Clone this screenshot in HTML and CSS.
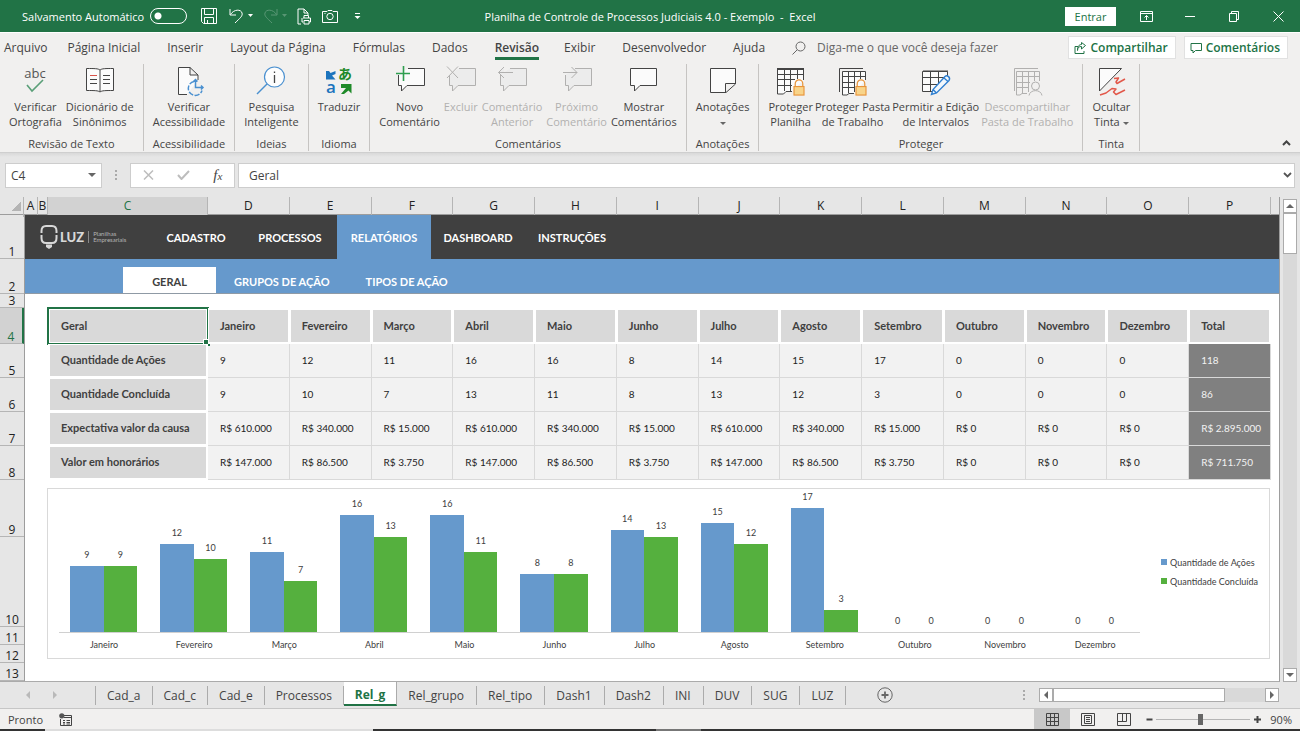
FILE: index.html
```html
<!DOCTYPE html>
<html lang="pt-BR">
<head>
    <meta charset="UTF-8">
    <title>Planilha de Controle de Processos Judiciais 4.0 - Exemplo - Excel</title>
    <link rel="stylesheet" href="styles.css">
</head>
<body>
<svg class="symbols" aria-hidden="true">
    <symbol id="bubble" viewBox="0 0 32 32">
        <path d="M4.500 11 V21.500 H7.500 V27 L13 21.500 H30.500 V4.500 H14"/>
    </symbol>
    <symbol id="lock" viewBox="0 0 12 18">
        <path d="M2 8 V5 a4 4 0 0 1 8 0 V8" fill="none" stroke="#e8943a" stroke-width="1.3"/>
        <rect x="0.7" y="8" width="10.6" height="9" fill="#f8d48a" stroke="#e8943a" stroke-width="1.2"/>
    </symbol>
</svg>

<header class="titlebar">
    <div class="quick-access">
        <label for="autosave">Salvamento Automático</label>
        <input type="checkbox" id="autosave" class="switch">
        <button class="qa save" aria-label="Salvar"><svg width="16" height="16" viewBox="0 0 16 16"><path d="M0.500 0.500 H15.500 V15.500 H2.500 L0.500 13.500 Z M3.500 0.500 V6.500 H12.500 V0.500 M3.500 15.500 V9.500 H12.500 V15.500 M6.500 12 V15"/></svg></button>
        <button class="qa undo" aria-label="Desfazer"><svg width="24" height="16" viewBox="0 0 24 16"><path d="M1 1 V7 H7 M1.500 6.500 C5 1 12 1 13 5 C14 8 11 10 6 15"/><path class="solid" d="M19 6 h5 l-2.500 3 z"/></svg></button>
        <button class="qa redo" aria-label="Refazer" disabled><svg width="24" height="16" viewBox="0 0 24 16"><path d="M14 1 V7 H8 M13.500 6.500 C10 1 3 1 2 5 C1 8 4 10 9 15"/><path class="solid" d="M19 6 h5 l-2.500 3 z"/></svg></button>
        <button class="qa" aria-label="Visualizar impressão"><svg width="15" height="17" viewBox="0 0 15 17"><path d="M4 16 H1 V1 H7 L11 5 V7 M7 1 V5 H11 M6 10 H13.500 V14 H12 M6 14 H5 V10 M7 10 V7.500 H11.500 V10 M7 12.500 H12 V16 H7 Z"/></svg></button>
        <button class="qa" aria-label="Câmera"><svg width="16" height="14" viewBox="0 0 16 14"><path d="M0.500 2.500 H5 L6 1.500 H10 L11 2.500 H15.500 V13.500 H0.500 Z M2.500 4.500 h1"/><circle cx="8" cy="7.500" r="3.200"/></svg></button>
        <button class="qa more" aria-label="Personalizar"><svg width="7" height="8" viewBox="0 0 7 8"><path d="M1 1.500 H6"/><path class="solid" d="M0.500 4 h6 l-3 3 z"/></svg></button>
    </div>
    <div class="doc-title">Planilha de Controle de Processos Judiciais 4.0 - Exemplo&nbsp; -&nbsp; Excel</div>
    <div class="window-controls">
        <button class="sign-in">Entrar</button>
        <button class="wc" aria-label="Opções da faixa"><svg width="13" height="11" viewBox="0 0 13 11"><path d="M0.500 0.500 H12.500 V10.500 H0.500 Z M0.500 2.500 H12.500 M6.500 9 V4.500 M4.500 6.500 L6.500 4.500 L8.500 6.500"/></svg></button>
        <button class="wc" aria-label="Minimizar"><svg width="10" height="11" viewBox="0 0 10 11"><path d="M0 5.500 H10"/></svg></button>
        <button class="wc" aria-label="Restaurar"><svg width="10" height="11" viewBox="0 0 10 11"><path d="M0.500 2.500 H7.500 V10.500 H0.500 Z M2.500 2.500 V0.500 H9.500 V8.500 H7.500"/></svg></button>
        <button class="wc" aria-label="Fechar"><svg width="11" height="11" viewBox="0 0 11 11"><path d="M0.500 0.500 L10.500 10.500 M10.500 0.500 L0.500 10.500"/></svg></button>
    </div>
</header>

<nav class="ribbon-tabs">
    <a href="#" class="file">Arquivo</a>
    <a href="#">Página Inicial</a>
    <a href="#">Inserir</a>
    <a href="#">Layout da Página</a>
    <a href="#">Fórmulas</a>
    <a href="#">Dados</a>
    <a href="#" class="active">Revisão</a>
    <a href="#">Exibir</a>
    <a href="#">Desenvolvedor</a>
    <a href="#">Ajuda</a>
    <button class="tell-me"><svg width="14" height="14" viewBox="0 0 14 14"><circle cx="8.500" cy="5.500" r="4.500"/><path d="M5.200 8.800 L0.500 13.500"/></svg>Diga-me o que você deseja fazer</button>
    <button class="share"><svg width="12" height="12" viewBox="0 0 12 12"><path d="M4 4.500 H1 V11.500 H10 V9 M3.500 8.500 C3.500 5.500 5 4.500 7.500 4.500 V7 L11.500 3.500 L7.500 0.500 V2.500 C5 2.500 3.500 4.500 3.500 8.500"/></svg>Compartilhar</button>
    <button class="share"><svg width="12" height="12" viewBox="0 0 12 12"><path d="M1 1.500 H11.500 V8.500 H5.500 L3 11 V8.500 H1 Z"/></svg>Comentários</button>
</nav>

<section class="ribbon">
    <div class="group">
        <div class="tools">
            <button class="tool">
                <svg class="icon" viewBox="0 0 32 32"><text x="16" y="14" class="abc">abc</text><path d="M8 21 L13 27 L24 16" stroke="#5a9f78" stroke-width="1.600"/></svg>
                Verificar<br>Ortografia
            </button>
            <button class="tool">
                <svg class="icon" viewBox="0 0 32 32"><path class="paper" d="M16 6 C14 4.500 11 4.500 2.500 4.500 V26.500 C11 26.500 14 26.500 16 28 C18 26.500 21 26.500 29.500 26.500 V4.500 C21 4.500 18 4.500 16 6 V28"/><path d="M6 15.500 H13 M6 19.500 H13 M19 11.500 H26 M19 15.500 H26 M19 19.500 H26"/><path d="M6 11.500 H13" stroke="#d9534a"/></svg>
                Dicionário de<br>Sinônimos
            </button>
        </div>
        <div class="group-name">Revisão de Texto</div>
    </div>
    <div class="group">
        <div class="tools">
            <button class="tool">
                <svg class="icon" viewBox="0 0 32 32"><path class="paper" d="M14 30.500 H5.500 V3.500 H17 L25 11 V16 M17 3.500 V11 H25"/><g stroke="#4a90d0" stroke-width="1.500"><path d="M21 17.500 a7 7 0 1 0 8 9" stroke-dasharray="5 1.500"/><path d="M22.500 15.500 V23.500 H30 M28 21.500 L30 23.500 L28 25.500 M20.500 17.500 L22.500 15.500 L24.500 17.500"/></g></svg>
                Verificar<br>Acessibilidade
            </button>
        </div>
        <div class="group-name">Acessibilidade</div>
    </div>
    <div class="group">
        <div class="tools">
            <button class="tool">
                <svg class="icon" viewBox="0 0 32 32"><path d="M12 20 L2 30" stroke="#4a90d0" stroke-width="1.400"/><circle cx="19.500" cy="13" r="10" fill="#fdfdfd" stroke="#4a90d0" stroke-width="1.200"/><path d="M19.500 11 V19 M19.500 7.500 V9" stroke-width="1.300"/></svg>
                Pesquisa<br>Inteligente
            </button>
        </div>
        <div class="group-name">Ideias</div>
    </div>
    <div class="group">
        <div class="tools">
            <button class="tool">
                <svg class="icon" viewBox="0 0 32 32"><path d="M3 7 L6 7 L7.500 9 L12.500 7 V10 L9 11.500 L12.500 15.500 H3 Z" fill="#1c74bd" stroke="none"/><text x="8" y="29" class="latin">a</text><text x="22" y="15" class="kana">あ</text><path d="M18 20 H28.500 V29.500 L25.500 26.500 L21 30 H18 L23 24 L18 24 Z" fill="#1e8a28" stroke="none"/></svg>
                Traduzir
            </button>
        </div>
        <div class="group-name">Idioma</div>
    </div>
    <div class="group">
        <div class="tools">
            <button class="tool">
                <svg class="icon bubble" viewBox="0 0 32 32"><use href="#bubble"/><path d="M2 9.500 H16 M9.500 2 V17" stroke="#2f9e4f" stroke-width="1.600"/></svg>
                Novo<br>Comentário
            </button>
            <button class="tool" disabled>
                <svg class="icon bubble" viewBox="0 0 32 32"><use href="#bubble"/><path d="M2 2.500 L13 14 M13 2.500 L2 14"/></svg>
                Excluir
            </button>
            <button class="tool" disabled>
                <svg class="icon bubble" viewBox="0 0 32 32"><use href="#bubble"/><path d="M17 8.500 H2.500 M8 3 L2.500 8.500 L8 14"/></svg>
                Comentário<br>Anterior
            </button>
            <button class="tool" disabled>
                <svg class="icon bubble" viewBox="0 0 32 32"><use href="#bubble"/><path d="M2 8.500 H16 M10.500 3 L16 8.500 L10.500 14"/></svg>
                Próximo<br>Comentário
            </button>
            <button class="tool">
                <svg class="icon bubble" viewBox="0 0 32 32"><path d="M2.500 4.500 H28.500 V21.500 H12 L6.500 27 V21.500 H2.500 Z"/></svg>
                Mostrar<br>Comentários
            </button>
        </div>
        <div class="group-name">Comentários</div>
    </div>
    <div class="group">
        <div class="tools">
            <button class="tool">
                <svg class="icon" viewBox="0 0 32 32"><path class="paper" d="M3.500 4.500 H28.500 V20 L19 28.500 H3.500 Z M28.500 19.500 H18.500 V28.500"/></svg>
                Anotações<br><span class="caret"></span>
            </button>
        </div>
        <div class="group-name">Anotações</div>
    </div>
    <div class="group">
        <div class="tools tight">
            <button class="tool">
                <svg class="icon" viewBox="0 0 32 32"><path class="paper" d="M17 27.500 H11 L8.500 30 H2.500 V5.500 H28.500 V16 M2.500 10.500 H29 M2.500 15.500 H20 M2.500 21.500 H17 M9.500 5.500 V27 M15.500 5.500 V27 M22.500 5.500 V15"/><path d="M2 5 H29" stroke-width="2"/><use href="#lock" x="18" y="15" width="12" height="17"/></svg>
                Proteger<br>Planilha
            </button>
            <button class="tool">
                <svg class="icon" viewBox="0 0 32 32"><path d="M2.500 28 V4.500 H26"/><path class="paper" d="M17 29.500 H12 L10 31 H5.500 V7.500 H28.500 V16 M5.500 12.500 H28 M5.500 18.500 H18 M5.500 23.500 H17 M11.500 8 V29 M17.500 8 V28 M23.500 8 V15"/><use href="#lock" x="18" y="15" width="12" height="17"/></svg>
                Proteger Pasta<br>de Trabalho
            </button>
            <button class="tool">
                <svg class="icon" viewBox="0 0 32 32"><path class="paper" d="M14 27.500 H2.500 V7.500 H27.500 V12 M3 13.500 H25 M3 20.500 H18 M10.500 7 V27 M18.500 7 V19 M3 7 H28"/><path d="M11.500 30.500 L13 25.500 L25 12.500 C27 10.500 31 13.500 29 16.500 L16.500 29 Z M13 25.500 L16.500 29 M24 14 L28 17.500" fill="#f2f8fd" stroke="#2f7fd0" stroke-width="1.400"/></svg>
                Permitir a Edição<br>de Intervalos
            </button>
            <button class="tool" disabled>
                <svg class="icon" viewBox="0 0 32 32"><path d="M3.500 27 V4.500 H27"/><path d="M16 29.500 H11 L9 31 H5.500 V7.500 H28.500 V17 M6 12.500 H29 M6 18.500 H19 M6 23.500 H17 M11.500 8 V29 M17.500 8 V28 M23.500 8 V17"/><circle cx="24.500" cy="22" r="4" fill="#f1f0ef"/><path d="M18 31.500 C19 25 30 25 31 31.500"/></svg>
                Descompartilhar<br>Pasta de Trabalho
            </button>
        </div>
        <div class="group-name">Proteger</div>
    </div>
    <div class="group">
        <div class="tools">
            <button class="tool">
                <svg class="icon" viewBox="0 0 32 32"><path class="paper" d="M4.500 4.500 H26.500 L4.500 27 Z"/><path d="M30 15 L22 19.500 L21 18 L23.500 14 L19 14.500 M30 26 L21 30.500 L18.500 28 L21 25 L17 24.500 L11 29 L5 31" stroke="#e2584a" stroke-width="1.500" stroke-linejoin="round"/></svg>
                Ocultar<br>Tinta <span class="caret"></span>
            </button>
        </div>
        <div class="group-name">Tinta</div>
    </div>
    <button class="collapse" aria-label="Recolher"><svg width="9" height="6" viewBox="0 0 9 6"><path d="M1 5 L4.500 1.500 L8 5"/></svg></button>
</section>

<section class="formula-bar">
    <div class="name-box">
        <input type="text" value="C4" aria-label="Caixa de nome">
        <span class="caret"></span>
    </div>
    <span class="grip"></span>
    <div class="formula-buttons">
        <button aria-label="Cancelar"><svg width="11" height="10" viewBox="0 0 11 10"><path d="M1 0.500 L10 9.500 M10 0.500 L1 9.500" stroke="#bdbdbd" stroke-width="1.500"/></svg></button>
        <button aria-label="Inserir"><svg width="13" height="10" viewBox="0 0 13 10"><path d="M1 5 L4.500 9 L12 1" stroke="#bdbdbd" stroke-width="2"/></svg></button>
        <button class="fx" aria-label="Inserir função">f<small>x</small></button>
    </div>
    <div class="formula">
        <input type="text" value="Geral" aria-label="Barra de fórmulas">
        <svg width="9" height="6" viewBox="0 0 9 6"><path d="M1 1 L4.500 4.500 L8 1" stroke="#555" stroke-width="1.800"/></svg>
    </div>
</section>

<main class="workbook">
    <div class="grid">
        <div class="col-heads">
            <span class="corner"></span><span>A</span><span>B</span><span class="selected">C</span><span>D</span><span>E</span><span>F</span><span>G</span><span>H</span><span>I</span><span>J</span><span>K</span><span>L</span><span>M</span><span>N</span><span>O</span><span>P</span><span></span>
        </div>
        <div class="row-heads">
            <span>1</span><span>2</span><span>3</span><span class="selected">4</span><span>5</span><span>6</span><span>7</span><span>8</span><span>9</span><span>10</span><span>11</span><span>12</span><span>13</span><span></span>
        </div>
        <div class="sheet">
            <nav class="menu">
                <div class="logo">
                    <svg width="18" height="26" viewBox="0 0 18 26"><path d="M1.500 9 V7 C1.500 3 3 2 6 2 H12 C15 2 16.500 3 16.500 7 V9 M1.500 11 V14 C1.500 18 3 19 6 19 H12 C15 19 16.500 18 16.500 14 V11" fill="none" stroke="#d8d8d8" stroke-width="2"/><path d="M6 20.500 H12 V23 L9 25 L6 23 Z" fill="#d8d8d8" stroke="none"/></svg>
                    <b>LUZ</b>
                    <small>Planilhas<br>Empresariais</small>
                </div>
                <a href="#">CADASTRO</a>
                <a href="#">PROCESSOS</a>
                <a href="#" class="active">RELATÓRIOS</a>
                <a href="#">DASHBOARD</a>
                <a href="#">INSTRUÇÕES</a>
            </nav>
            <nav class="submenu">
                <a href="#" class="active">GERAL</a>
                <a href="#">GRUPOS DE AÇÃO</a>
                <a href="#">TIPOS DE AÇÃO</a>
            </nav>
            <table class="report">
                <thead>
                    <tr><th class="cell-cursor">Geral</th><th>Janeiro</th><th>Fevereiro</th><th>Março</th><th>Abril</th><th>Maio</th><th>Junho</th><th>Julho</th><th>Agosto</th><th>Setembro</th><th>Outubro</th><th>Novembro</th><th>Dezembro</th><th>Total</th></tr>
                </thead>
                <tbody>
                    <tr><th>Quantidade de Ações</th><td>9</td><td>12</td><td>11</td><td>16</td><td>16</td><td>8</td><td>14</td><td>15</td><td>17</td><td>0</td><td>0</td><td>0</td><td>118</td></tr>
                    <tr><th>Quantidade Concluída</th><td>9</td><td>10</td><td>7</td><td>13</td><td>11</td><td>8</td><td>13</td><td>12</td><td>3</td><td>0</td><td>0</td><td>0</td><td>86</td></tr>
                    <tr><th>Expectativa valor da causa</th><td>R$ 610.000</td><td>R$ 340.000</td><td>R$ 15.000</td><td>R$ 610.000</td><td>R$ 340.000</td><td>R$ 15.000</td><td>R$ 610.000</td><td>R$ 340.000</td><td>R$ 15.000</td><td>R$ 0</td><td>R$ 0</td><td>R$ 0</td><td>R$ 2.895.000</td></tr>
                    <tr><th>Valor em honorários</th><td>R$ 147.000</td><td>R$ 86.500</td><td>R$ 3.750</td><td>R$ 147.000</td><td>R$ 86.500</td><td>R$ 3.750</td><td>R$ 147.000</td><td>R$ 86.500</td><td>R$ 3.750</td><td>R$ 0</td><td>R$ 0</td><td>R$ 0</td><td>R$ 711.750</td></tr>
                </tbody>
            </table>
            <div class="chart">
                <div class="plot" id="plot"></div>
                <ul class="legend">
                    <li>Quantidade de Ações</li>
                    <li class="done">Quantidade Concluída</li>
                </ul>
            </div>
        </div>
    </div>
    <div class="vscroll">
        <button aria-label="Rolar para cima"><i class="arrow up"></i></button>
        <div class="thumb"></div>
        <button class="end" aria-label="Rolar para baixo"><i class="arrow down"></i></button>
    </div>
</main>

<nav class="sheet-tabs">
    <div class="tab-arrows"><i class="arrow left"></i><i class="arrow right"></i></div>
    <a href="#">Cad_a</a>
    <a href="#">Cad_c</a>
    <a href="#">Cad_e</a>
    <a href="#">Processos</a>
    <a href="#" class="active">Rel_g</a>
    <a href="#">Rel_grupo</a>
    <a href="#">Rel_tipo</a>
    <a href="#">Dash1</a>
    <a href="#">Dash2</a>
    <a href="#">INI</a>
    <a href="#">DUV</a>
    <a href="#">SUG</a>
    <a href="#">LUZ</a>
    <button class="add-sheet" aria-label="Nova planilha"><svg width="16" height="16" viewBox="0 0 16 16"><circle cx="8" cy="8" r="7.200"/><path d="M4.500 8 H11.500 M8 4.500 V11.500" stroke-width="1.800"/></svg></button>
    <span class="grip"></span>
    <div class="hscroll">
        <button aria-label="Rolar para a esquerda"><i class="arrow left"></i></button>
        <div class="thumb"></div>
        <button class="end" aria-label="Rolar para a direita"><i class="arrow right"></i></button>
    </div>
</nav>

<footer class="statusbar">
    <span>Pronto</span>
    <svg class="macro" width="13" height="13" viewBox="0 0 13 13"><path d="M5 2.500 H12.500 V12.500 H1.500 V6 M5 4.500 H12.500 M4 7.500 H6 M7.500 7.500 H11 M4 9.500 H6 M7.500 9.500 H11 M4 11 H6 M7.500 11 H11"/><circle cx="2.800" cy="2.800" r="2.600" fill="#555" stroke="none"/></svg>
    <div class="views">
        <button class="active" aria-label="Normal"><svg width="13" height="13" viewBox="0 0 13 13"><path d="M0.500 0.500 H12.500 V12.500 H0.500 Z M4.500 0.500 V12.500 M8.500 0.500 V12.500 M0.500 4.500 H12.500 M0.500 8.500 H12.500"/></svg></button>
        <button aria-label="Layout da Página"><svg width="14" height="13" viewBox="0 0 14 13"><path d="M0.500 0.500 H13.500 V12.500 H0.500 Z M3.500 2.500 H10.500 V10.500 H3.500 Z M5 4.500 H9 M5 6.500 H9 M5 8.500 H9"/></svg></button>
        <button aria-label="Quebra de Página"><svg width="14" height="13" viewBox="0 0 14 13"><path d="M0.500 0.500 H13.500 V12.500 H0.500 Z M0.500 8.500 H9.500 V0.500 M5.500 0.500 V8.500"/></svg></button>
    </div>
    <button class="zoom-step" aria-label="Menos zoom"><svg width="7" height="7" viewBox="0 0 7 7"><path d="M0.500 3.500 H6.500"/></svg></button>
    <input type="range" class="zoom" min="10" max="170" value="85" aria-label="Zoom">
    <button class="zoom-step" aria-label="Mais zoom"><svg width="7" height="7" viewBox="0 0 7 7"><path d="M0 3.500 H7 M3.500 0 V7"/></svg></button>
    <span class="zoom-value">90%</span>
</footer>
<div class="taskbar-edge"></div>

<script>
    const months = ['Janeiro', 'Fevereiro', 'Março', 'Abril', 'Maio', 'Junho', 'Julho', 'Agosto', 'Setembro', 'Outubro', 'Novembro', 'Dezembro'];
    const actions = [9, 12, 11, 16, 16, 8, 14, 15, 17, 0, 0, 0];
    const done = [9, 10, 7, 13, 11, 8, 13, 12, 3, 0, 0, 0];

    // tallest bar (17) is 124px high
    function bar(value, cls) {
        return `<div class="bar ${cls}"><span>${value}</span><i style="height: ${Math.round(value * 124 / 17)}px"></i></div>`;
    }

    document.getElementById('plot').innerHTML = months.map((month, i) => `
        <div class="month">
            <div class="bars">${bar(actions[i], '')}${bar(done[i], 'done')}</div>
            <div class="month-name">${month}</div>
        </div>`).join('');
</script>
</body>
</html>
```
FILE: styles.css
```css
* {
    box-sizing: border-box;
}
body {
    margin: 0;
    height: 100vh;
    display: flex;
    flex-direction: column;
    overflow: hidden;
    background: #e6e6e6;
    color: #444;
    font-family: "Open Sans", sans-serif;
    font-size: 12px;
}
a {
    color: inherit;
    text-decoration: none;
}
button, input {
    margin: 0;
    padding: 0;
    border: 0;
    background: none;
    color: inherit;
    font: inherit;
}
svg {
    fill: none;
    stroke: currentColor;
    flex: none;
}
.symbols {
    display: none;
}
.caret {
    display: inline-block;
    vertical-align: middle;
    border: 3px solid transparent;
    border-top-color: #666;
    border-bottom: 0;
}
.grip {
    width: 2px;
    height: 10px;
    background: repeating-linear-gradient(#aaa 0 2px, transparent 2px 4px);
}

/* title bar */
.titlebar {
    flex: none;
    height: 32px;
    display: grid;
    grid-template-columns: 1fr auto 1fr;
    align-items: center;
    background: #217346;
    color: #fff;
    font-size: 11px;
}
.quick-access {
    display: flex;
    align-items: center;
    padding-left: 22px;
}
.switch {
    appearance: none;
    width: 37px;
    height: 16px;
    margin: 0 14px 0 6px;
    border: 1px solid #fff;
    border-radius: 8px;
    background: radial-gradient(circle at 7px 7px, #fff 3px, transparent 4px);
}
.qa {
    display: flex;
    margin-right: 10px;
}
.qa.save {
    margin-right: 12px;
}
.redo {
    opacity: 0.25;
}
.solid {
    fill: currentColor;
    stroke: none;
}
.qa.more {
    margin-left: 6px;
}
.window-controls {
    display: flex;
    align-items: center;
    justify-content: flex-end;
}
.sign-in {
    width: 51px;
    height: 19px;
    margin-right: 8px;
    background: #fff;
    color: #217346;
}
.wc {
    width: 44px;
    display: flex;
    justify-content: center;
}

/* ribbon */
.ribbon-tabs {
    flex: none;
    height: 30px;
    display: flex;
    align-items: center;
    padding: 0 12px 0 4px;
    background: #f1f0ef;
    border-top: 1px solid #fff;
}
.ribbon-tabs a {
    margin-right: 27px;
    white-space: nowrap;
}
.ribbon-tabs .file {
    margin-right: 20px;
}
.ribbon-tabs .active {
    margin-right: 25px;
    padding: 4px 0 1px;
    border-bottom: 3px solid #217346;
    font-weight: 600;
}
.tell-me {
    display: flex;
    align-items: center;
    gap: 11px;
    margin-right: auto;
    color: #666;
    white-space: nowrap;
}
.share {
    height: 23px;
    display: flex;
    align-items: center;
    gap: 4px;
    margin-left: 8px;
    padding: 0 7px 0 5px;
    background: #fff;
    border: 1px solid #e1e1e1;
    color: #217346;
    font-weight: 600;
}
.ribbon {
    flex: none;
    height: 91px;
    display: flex;
    padding-top: 2px;
    background: #f1f0ef;
    border-bottom: 1px solid #cfcfcf;
    font-size: 11px;
}
.group {
    display: flex;
    flex-direction: column;
    justify-content: space-between;
    height: 87px;
    padding: 0 9px;
    border-right: 1px solid #c6c4c2;
}
.tools {
    display: flex;
    gap: 4px;
}
.tools.tight {
    gap: 2px;
}
.tool {
    display: block;
    line-height: 15px;
    white-space: nowrap;
    text-align: center;
    align-self: flex-start;
}
.tool:disabled {
    color: #b1b0af;
}
.icon {
    display: block;
    width: 32px;
    height: 32px;
    margin: 0 auto 3px;
    overflow: visible;
}
.paper, .bubble {
    fill: #fbfbfb;
}
.tool:disabled .bubble {
    fill: #ececec;
}
.abc, .latin, .kana {
    fill: #555;
    stroke: none;
    font-size: 13px;
    text-anchor: middle;
}
.latin {
    fill: #1c74bd;
    font-size: 17px;
    font-weight: 600;
}
.kana {
    fill: #1e8a28;
    font-family: "Noto Sans CJK JP", sans-serif;
    font-weight: 700;
    font-size: 14px;
}
.group-name {
    line-height: 14px;
    text-align: center;
}
.collapse {
    margin: auto 9px 3px auto;
    stroke-width: 2px;
}

/* formula bar */
.formula-bar {
    flex: none;
    height: 44px;
    display: flex;
    align-items: center;
    padding: 0 5px;
    background: linear-gradient(#d9d9d9, #e6e6e6 4px);
}
.name-box, .formula-buttons, .formula {
    height: 25px;
    display: flex;
    align-items: center;
    background: #fff;
    border: 1px solid #cdcdcd;
}
.name-box {
    width: 97px;
    padding: 0 5px;
}
.name-box input {
    flex: 1;
    min-width: 0;
}
.name-box .caret {
    border-width: 4px 4px 0;
}
.formula-bar .grip {
    margin: 0 13px;
}
.formula-buttons {
    width: 105px;
    justify-content: space-around;
    margin-right: 3px;
}
.fx {
    font-family: "Liberation Serif", serif;
    font-style: italic;
    font-size: 15px;
}
.fx small {
    font-size: 11px;
}
.formula {
    flex: 1;
    padding: 0 2px 0 10px;
}
.formula input {
    flex: 1;
}

/* worksheet */
.workbook {
    flex: 1;
    min-height: 0;
    display: flex;
}
.grid {
    flex: 1;
    min-height: 0;
    display: grid;
    grid-template: 18px 1fr / 25px 1fr;
    border-right: 1px solid #9d9d9d;
    border-bottom: 1px solid #ababab;
    color: #222;
    overflow: hidden;
}
.col-heads {
    grid-column: 1 / 3;
    display: grid;
    grid-template-columns: 24px 14px 10px 160px repeat(13, 1fr) 8px;
    border-bottom: 1px solid #9d9d9d;
    line-height: 18px;
    text-align: center;
}
.col-heads span {
    border-right: 1px solid #b5b5b5;
}
.col-heads .selected {
    background: #d2d2d2;
    border-bottom: 2px solid #217346;
    color: #217346;
}
.col-heads .corner {
    background: linear-gradient(135deg, transparent 50%, #b4b4b4 50%) 11px 4px / 10px 10px no-repeat;
}
.col-heads span:last-child {
    border: 0;
}
.row-heads {
    display: grid;
    grid-template-rows: 44px 35px 14px 36px 34px 34px 34px 34px 57px 90px 18px 18px 18px 1fr;
    border-right: 1px solid #9d9d9d;
    text-align: center;
    line-height: 13px;
}
.row-heads span {
    display: flex;
    align-items: flex-end;
    justify-content: center;
    border-bottom: 1px solid #b5b5b5;
    min-height: 0;
}
.row-heads .selected {
    background: #d2d2d2;
    border-right: 2px solid #217346;
    color: #217346;
}
.sheet {
    background: #fff;
    font-family: Lato, sans-serif;
    font-size: 11px;
}
.menu {
    height: 44px;
    display: flex;
    background: #404040;
    color: #fff;
    font-weight: 700;
}
.logo {
    width: 124px;
    display: flex;
    align-items: center;
    padding-left: 15px;
    color: #d8d8d8;
}
.logo b {
    margin: 0 4px 0 2px;
    font-size: 13px;
}
.logo small {
    padding-left: 4px;
    border-left: 1px solid #8a8a8a;
    font-size: 6px;
    line-height: 6px;
    font-weight: 400;
    color: #b5b5b5;
}
.menu a {
    width: 94px;
    display: flex;
    align-items: center;
    justify-content: center;
}
.menu .active {
    background: #6699cc;
}
.submenu {
    height: 35px;
    display: flex;
    align-items: flex-end;
    padding-left: 98px;
    background: #6699cc;
    border-bottom: 1px solid #8f9aa5;
    color: #fff;
    font-weight: 700;
}
.submenu a {
    padding: 3px 18px 0;
    line-height: 23px;
}
.submenu .active {
    min-width: 93px;
    background: #fff;
    color: #404040;
    text-align: center;
}
.report {
    width: calc(100% - 31px);
    margin: 14px 0 0 23px;
    border-spacing: 0;
    table-layout: fixed;
    font-size: 10px;
}
.report th, .report td {
    height: 34px;
    padding: 0 0 2px 11px;
    text-align: left;
    white-space: nowrap;
}
.report th {
    position: relative;
    background: #d9d9d9;
    border: solid #fff;
    border-width: 1px 2px 2px 1px;
    color: #404040;
    font-size: 11px;
}
.report th:first-child {
    width: 160px;
    border-left-width: 2px;
}
.report thead th {
    height: 36px;
    border-top-width: 2px;
}
.report td {
    padding-left: 12px;
    background: #f2f2f2;
    border: solid #d9d9d9;
    border-width: 0 1px 1px 0;
}
.report td:last-child {
    background: #808080;
    color: #f2f2f2;
}
.cell-cursor::before {
    content: "";
    position: absolute;
    inset: -3px -3px -3px -3px;
    border: 2px solid #217346;
}
.cell-cursor::after {
    content: "";
    position: absolute;
    right: -4px;
    bottom: -4px;
    width: 6px;
    height: 6px;
    background: #217346;
    border: solid #fff;
    border-width: 1px 0 0 1px;
}

/* chart */
.chart {
    display: flex;
    justify-content: space-between;
    height: 171px;
    margin: 8px 9px 0 22px;
    padding: 0 11px;
    border: 1px solid #d9d9d9;
    font-size: 9px;
    color: #404040;
}
.plot {
    flex: 1;
    display: flex;
}
.month {
    flex: 1;
    text-align: center;
}
.bars {
    height: 144px;
    display: flex;
    align-items: flex-end;
    padding: 0 12px 0 11px;
    border-bottom: 1px solid #d0d0d0;
}
.bar {
    flex: 1;
}
.bar span {
    display: block;
    line-height: 11px;
    margin-bottom: 6px;
}
.bar i {
    display: block;
    background: #6699cc;
}
.bar.done i {
    background: #55b03e;
}
.month-name {
    line-height: 24px;
}
.legend {
    align-self: center;
    margin: 0 0 4px 21px;
    padding: 0;
    list-style: none;
    line-height: 19px;
}
.legend li {
    display: flex;
    align-items: center;
    gap: 3px;
    white-space: nowrap;
}
.legend li::before {
    content: "";
    width: 6px;
    height: 6px;
    background: #6699cc;
}
.legend .done::before {
    background: #55b03e;
}

/* scroll bars */
.vscroll {
    display: flex;
    flex-direction: column;
    width: 14px;
    margin: 2px 3px 0;
    background: #d9d9d9;
}
.hscroll {
    display: flex;
    width: 240px;
    height: 14px;
    margin-right: 21px;
    background: #d9d9d9;
}
.vscroll button, .hscroll button {
    width: 14px;
    height: 14px;
    display: flex;
    align-items: center;
    justify-content: center;
    background: #fff;
    border: 1px solid #ababab;
}
.thumb {
    background: #fff;
    border: 1px solid #ababab;
}
.vscroll .thumb {
    height: 41px;
}
.hscroll .thumb {
    width: 172px;
}
.vscroll .end {
    margin-top: auto;
}
.hscroll .end {
    margin-left: auto;
}
.arrow {
    border: 4px solid transparent;
}
.arrow.up {
    border-bottom-color: #666;
    border-top: 0;
}
.arrow.down {
    border-top-color: #666;
    border-bottom: 0;
}
.arrow.left {
    border-right-color: #666;
    border-left: 0;
}
.arrow.right {
    border-left-color: #666;
    border-right: 0;
}

/* sheet tabs */
.sheet-tabs {
    flex: none;
    height: 27px;
    display: flex;
    align-items: center;
    border-bottom: 1px solid #c6c6c6;
    color: #444;
}
.tab-arrows {
    width: 96px;
    display: flex;
    align-items: center;
    gap: 23px;
    padding-left: 26px;
    opacity: 0.35;
    height: 19px;
    border-right: 1px solid #444;
}
.sheet-tabs a {
    padding: 0 11px;
    line-height: 19px;
    border-right: 1px solid #ababab;
}
.sheet-tabs a:nth-of-type(n+6) {
    padding-right: 12px;
}
.sheet-tabs .active {
    align-self: flex-start;
    height: 24px;
    line-height: 26px;
    background: #fff;
    border-bottom: 2px solid #217346;
    color: #217346;
    font-weight: 700;
}
.add-sheet {
    display: flex;
    margin: 0 auto 0 31px;
    color: #666;
}
.sheet-tabs .grip {
    margin-right: 14px;
}

/* status bar */
.statusbar {
    flex: none;
    height: 20px;
    display: flex;
    align-items: center;
    padding: 0 8px;
    background: #f1f0ef;
    font-size: 11px;
}
.macro {
    margin-left: 16px;
}
.views {
    display: flex;
    margin-left: auto;
}
.views button {
    width: 36px;
    height: 20px;
    display: flex;
    align-items: center;
    justify-content: center;
}
.views .active {
    background: #c8c8c8;
}
.zoom-step {
    display: flex;
    margin: 0 3px 0 4px;
    stroke-width: 2px;
}
.zoom {
    appearance: none;
    width: 94px;
    height: 12px;
    background: linear-gradient(#b5b5b5, #b5b5b5) center / 100% 1px no-repeat;
}
.zoom::-webkit-slider-thumb {
    appearance: none;
    width: 5px;
    height: 11px;
    background: #666;
}
.zoom-value {
    margin-left: 6px;
}
.taskbar-edge {
    flex: none;
    height: 2px;
    background: linear-gradient(to right, #333 45px, #ddd 45px 373px, #333 373px 656px, #777 656px 701px, #333 701px);
}
```
